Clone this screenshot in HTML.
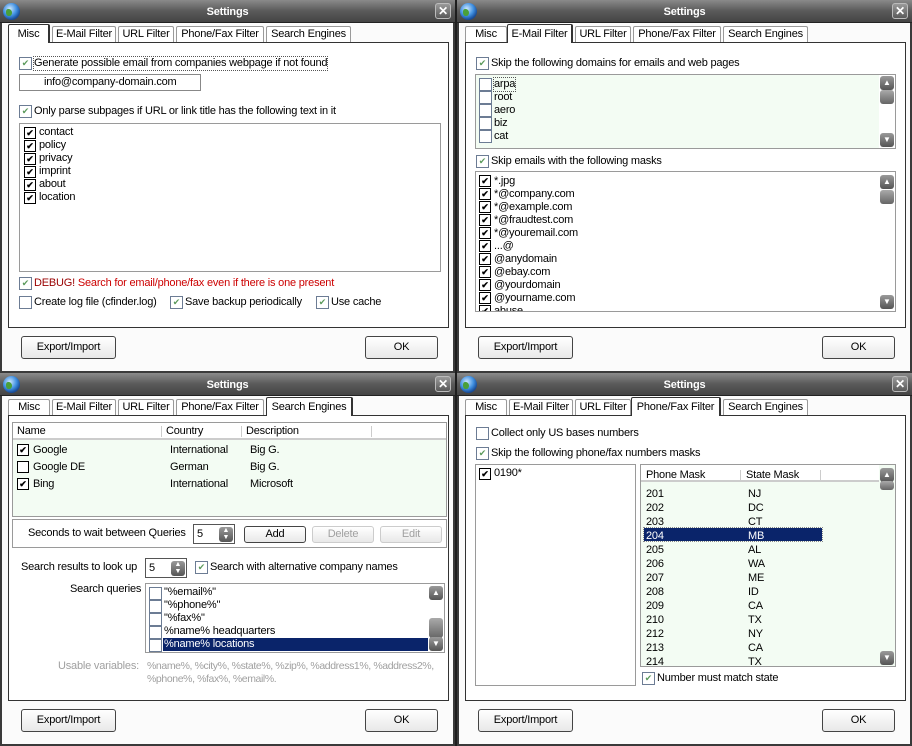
<!DOCTYPE html>
<html><head><meta charset="utf-8"><style>
*{margin:0;padding:0;box-sizing:border-box}
body{width:912px;height:746px;background:#1e1e1e;font-family:"Liberation Sans",sans-serif;font-size:11px;letter-spacing:-0.2px;color:#000;position:relative;overflow:hidden}
.w{position:absolute;width:455px;height:373px;background:#fbfbfb;border:2px solid #3a3a3a;border-top:none}
.a{position:absolute;white-space:nowrap;line-height:13px}
.tb{position:absolute;left:-2px;top:0;width:455px;height:23px;background:linear-gradient(#8a8a8a,#5a5a5a 50%,#444);border-bottom:1px solid #222}
.tt{position:absolute;left:0;right:0;top:6px;text-align:center;color:#fff;font-weight:bold;font-size:11px}
.gl{position:absolute;left:3px;top:3px;width:17px;height:17px;border-radius:50%;background:radial-gradient(circle at 40% 35%,#cfe8ff,#3f8fe0 45%,#1b4f9a 70%,#0b2e63);}
.gl:after{content:"";position:absolute;left:3px;top:6px;width:6px;height:7px;background:#4aa03a;border-radius:40% 60% 50% 50%}
.cx{position:absolute;right:4px;top:3px;width:16px;height:16px;border:1px solid #bbb;border-radius:3px;background:linear-gradient(#9a9a9a,#5a5a5a);color:#fff;font-weight:bold;font-size:12px;text-align:center;line-height:14px}
.tab{position:absolute;top:26px;height:16px;border:1px solid #9a9a9a;border-bottom:none;background:#fff;text-align:center;line-height:14px;border-radius:2px 2px 0 0}
.tab.on{top:24px;height:19px;border-color:#333;border-width:1px 2px 0 1px;z-index:2;line-height:18px}
.pn{position:absolute;left:6px;top:42px;width:441px;height:286px;border:1px solid #333;background:#fff}
.cb{position:absolute;width:13px;height:13px;border:1px solid #6c7c94;background:#fff;color:#5b9a5b;font-size:9px;line-height:11px;text-align:center;overflow:hidden;letter-spacing:0}
.k{border:1px solid #000;color:#000;font-weight:bold;width:12px;height:12px;line-height:10px}
.bt{position:absolute;height:23px;border:1px solid #444;border-radius:3px;background:linear-gradient(#fff,#e8e8e8);text-align:center;line-height:21px}
.lb{position:absolute;border:1px solid #9a9a9a;background:#fff;overflow:hidden}
.gr{background:#f3fcf3}
.sb{position:absolute;width:16px;background:#fff}
.ar{position:absolute;left:1px;width:14px;height:14px;border-radius:3px;background:linear-gradient(#9a9a9a,#555);color:#fff;font-size:8px;text-align:center;line-height:14px;letter-spacing:0}
.th{position:absolute;width:14px;left:1px;height:14px;border-radius:3px;background:linear-gradient(#aaa,#666)}
.gy{color:#a0a0a0}
</style></head><body>

<!-- Window 1: Misc -->
<div class="w" style="left:0;top:0">
<div class="tb"><div class="gl"></div><div class="tt">Settings</div><div class="cx">✕</div></div>
<div class="tab on" style="left:6px;width:42px">Misc</div>
<div class="tab" style="left:50px;width:64px">E-Mail Filter</div>
<div class="tab" style="left:116px;width:56px">URL Filter</div>
<div class="tab" style="left:174px;width:88px">Phone/Fax Filter</div>
<div class="tab" style="left:264px;width:85px">Search Engines</div>
<div class="pn"></div>
<div class="cb" style="left:17px;top:57px">✔</div><div class="a" style="left:32px;top:57px;outline:1px dotted #555">Generate possible email from companies webpage if not found</div>
<div class="lb" style="left:17px;top:74px;width:182px;height:17px;border-color:#888"><div class="a" style="left:24px;top:1px">info@company-domain.com</div></div>
<div class="cb" style="left:17px;top:105px">✔</div><div class="a" style="left:32px;top:105px">Only parse subpages if URL or link title has the following text in it</div>
<div class="lb" style="left:17px;top:123px;width:422px;height:149px">
<div class="cb k" style="left:4px;top:3px">✔</div><div class="a" style="left:19px;top:2px">contact</div>
<div class="cb k" style="left:4px;top:16px">✔</div><div class="a" style="left:19px;top:15px">policy</div>
<div class="cb k" style="left:4px;top:29px">✔</div><div class="a" style="left:19px;top:28px">privacy</div>
<div class="cb k" style="left:4px;top:42px">✔</div><div class="a" style="left:19px;top:41px">imprint</div>
<div class="cb k" style="left:4px;top:55px">✔</div><div class="a" style="left:19px;top:54px">about</div>
<div class="cb k" style="left:4px;top:68px">✔</div><div class="a" style="left:19px;top:67px">location</div>
</div>
<div class="cb" style="left:17px;top:277px">✔</div><div class="a" style="left:32px;top:277px;color:#900">DEBUG! <span style="color:#c00">Search for email/phone/fax even if there is one present</span></div>
<div class="cb" style="left:17px;top:296px"></div><div class="a" style="left:32px;top:296px">Create log file (cfinder.log)</div>
<div class="cb" style="left:168px;top:296px">✔</div><div class="a" style="left:183px;top:296px">Save backup periodically</div>
<div class="cb" style="left:314px;top:296px">✔</div><div class="a" style="left:329px;top:296px">Use cache</div>
<div class="bt" style="left:19px;top:336px;width:95px">Export/Import</div>
<div class="bt" style="left:363px;top:336px;width:73px">OK</div>
</div>

<!-- Window 2: E-Mail Filter -->
<div class="w" style="left:457px;top:0">
<div class="tb"><div class="gl"></div><div class="tt">Settings</div><div class="cx">✕</div></div>
<div class="tab" style="left:6px;width:42px">Misc</div>
<div class="tab on" style="left:48px;width:66px">E-Mail Filter</div>
<div class="tab" style="left:116px;width:56px">URL Filter</div>
<div class="tab" style="left:174px;width:88px">Phone/Fax Filter</div>
<div class="tab" style="left:264px;width:85px">Search Engines</div>
<div class="pn"></div>
<div class="cb" style="left:17px;top:57px">✔</div><div class="a" style="left:32px;top:57px">Skip the following domains for emails and web pages</div>
<div class="lb gr" style="left:16px;top:74px;width:421px;height:75px">
<div class="cb" style="left:3px;top:3px"></div><div class="a" style="left:18px;top:3px;outline:1px dotted #555">arpa</div>
<div class="cb" style="left:3px;top:16px"></div><div class="a" style="left:18px;top:16px">root</div>
<div class="cb" style="left:3px;top:29px"></div><div class="a" style="left:18px;top:29px">aero</div>
<div class="cb" style="left:3px;top:42px"></div><div class="a" style="left:18px;top:42px">biz</div>
<div class="cb" style="left:3px;top:55px"></div><div class="a" style="left:18px;top:55px">cat</div>
<div class="sb" style="right:0;top:0;height:73px"><div class="ar" style="top:1px">▲</div><div class="th" style="top:15px"></div><div class="ar" style="bottom:1px">▼</div></div>
</div>
<div class="cb" style="left:17px;top:155px">✔</div><div class="a" style="left:32px;top:155px">Skip emails with the following masks</div>
<div class="lb" style="left:16px;top:171px;width:421px;height:141px">
<div class="cb k" style="left:3px;top:3px">✔</div><div class="a" style="left:18px;top:3px">*.jpg</div>
<div class="cb k" style="left:3px;top:16px">✔</div><div class="a" style="left:18px;top:16px">*@company.com</div>
<div class="cb k" style="left:3px;top:29px">✔</div><div class="a" style="left:18px;top:29px">*@example.com</div>
<div class="cb k" style="left:3px;top:42px">✔</div><div class="a" style="left:18px;top:42px">*@fraudtest.com</div>
<div class="cb k" style="left:3px;top:55px">✔</div><div class="a" style="left:18px;top:55px">*@youremail.com</div>
<div class="cb k" style="left:3px;top:68px">✔</div><div class="a" style="left:18px;top:68px">...@</div>
<div class="cb k" style="left:3px;top:81px">✔</div><div class="a" style="left:18px;top:81px">@anydomain</div>
<div class="cb k" style="left:3px;top:94px">✔</div><div class="a" style="left:18px;top:94px">@ebay.com</div>
<div class="cb k" style="left:3px;top:107px">✔</div><div class="a" style="left:18px;top:107px">@yourdomain</div>
<div class="cb k" style="left:3px;top:120px">✔</div><div class="a" style="left:18px;top:120px">@yourname.com</div>
<div class="cb k" style="left:3px;top:133px">✔</div><div class="a" style="left:18px;top:133px">abuse</div>
<div class="sb" style="right:0;top:0;height:139px"><div class="ar" style="top:3px">▲</div><div class="th" style="top:18px"></div><div class="ar" style="bottom:2px">▼</div></div>
</div>
<div class="bt" style="left:19px;top:336px;width:95px">Export/Import</div>
<div class="bt" style="left:363px;top:336px;width:73px">OK</div>
</div>

<!-- Window 3: Search Engines -->
<div class="w" style="left:0;top:373px">
<div class="tb"><div class="gl"></div><div class="tt">Settings</div><div class="cx">✕</div></div>
<div class="tab" style="left:6px;width:42px">Misc</div>
<div class="tab" style="left:50px;width:64px">E-Mail Filter</div>
<div class="tab" style="left:116px;width:56px">URL Filter</div>
<div class="tab" style="left:174px;width:88px">Phone/Fax Filter</div>
<div class="tab on" style="left:264px;width:87px">Search Engines</div>
<div class="pn"></div>
<div class="lb gr" style="left:10px;top:49px;width:435px;height:95px">
<div style="position:absolute;left:0;top:0;width:100%;height:17px;background:#fff;border-bottom:2px solid #ccc"></div>
<div class="a" style="left:4px;top:2px">Name</div><div class="a" style="left:153px;top:2px">Country</div><div class="a" style="left:233px;top:2px">Description</div>
<div style="position:absolute;left:148px;top:3px;width:1px;height:11px;background:#ccc"></div>
<div style="position:absolute;left:228px;top:3px;width:1px;height:11px;background:#ccc"></div>
<div style="position:absolute;left:358px;top:3px;width:1px;height:11px;background:#ccc"></div>
<div class="cb k" style="left:4px;top:21px">✔</div><div class="a" style="left:20px;top:21px">Google</div><div class="a" style="left:157px;top:21px">International</div><div class="a" style="left:237px;top:21px">Big G.</div>
<div class="cb k" style="left:4px;top:38px"></div><div class="a" style="left:20px;top:38px">Google DE</div><div class="a" style="left:157px;top:38px">German</div><div class="a" style="left:237px;top:38px">Big G.</div>
<div class="cb k" style="left:4px;top:55px">✔</div><div class="a" style="left:20px;top:55px">Bing</div><div class="a" style="left:157px;top:55px">International</div><div class="a" style="left:237px;top:55px">Microsoft</div>
</div>
<div class="lb" style="left:10px;top:146px;width:435px;height:29px"></div>
<div class="a" style="left:26px;top:154px">Seconds to wait between Queries</div>
<div class="lb" style="left:191px;top:151px;width:42px;height:20px;border-color:#555"><div class="a" style="left:3px;top:3px">5</div><div class="ar" style="left:25px;top:2px;height:15px;font-size:7px;line-height:7px">▲<br>▼</div></div>
<div class="bt" style="left:242px;top:153px;width:62px;height:17px;line-height:15px">Add</div>
<div class="bt gy" style="left:310px;top:153px;width:62px;height:17px;line-height:15px;border-color:#ccc">Delete</div>
<div class="bt gy" style="left:378px;top:153px;width:62px;height:17px;line-height:15px;border-color:#ccc">Edit</div>
<div class="a" style="left:19px;top:188px">Search results to look up</div>
<div class="lb" style="left:143px;top:185px;width:42px;height:20px;border-color:#555"><div class="a" style="left:3px;top:3px">5</div><div class="ar" style="left:25px;top:2px;height:15px;font-size:7px;line-height:7px">▲<br>▼</div></div>
<div class="cb" style="left:193px;top:188px">✔</div><div class="a" style="left:208px;top:188px">Search with alternative company names</div>
<div class="a" style="left:68px;top:210px">Search queries</div>
<div class="lb" style="left:143px;top:210px;width:300px;height:70px">
<div class="cb" style="left:3px;top:3px"></div><div class="a" style="left:18px;top:2px">"%email%"</div>
<div class="cb" style="left:3px;top:16px"></div><div class="a" style="left:18px;top:15px">"%phone%"</div>
<div class="cb" style="left:3px;top:29px"></div><div class="a" style="left:18px;top:28px">"%fax%"</div>
<div class="cb" style="left:3px;top:42px"></div><div class="a" style="left:18px;top:41px">%name% headquarters</div>
<div class="cb" style="left:3px;top:55px"></div><div style="position:absolute;left:17px;top:54px;width:265px;height:13px;background:#0a246a"></div><div class="a" style="left:18px;top:54px;color:#fff">%name% locations</div>
<div class="sb" style="right:0;top:0;height:68px"><div class="ar" style="top:2px">▲</div><div class="th" style="top:34px;height:20px"></div><div class="ar" style="bottom:1px">▼</div></div>
</div>
<div class="a gy" style="left:56px;top:287px">Usable variables:</div>
<div class="a gy" style="left:145px;top:287px;font-size:10.5px;letter-spacing:-0.4px">%name%, %city%, %state%, %zip%, %address1%, %address2%,</div>
<div class="a gy" style="left:145px;top:300px;font-size:10.5px;letter-spacing:-0.4px">%phone%, %fax%, %email%.</div>
<div class="bt" style="left:19px;top:336px;width:95px">Export/Import</div>
<div class="bt" style="left:363px;top:336px;width:73px">OK</div>
</div>

<!-- Window 4: Phone/Fax -->
<div class="w" style="left:457px;top:373px">
<div class="tb"><div class="gl"></div><div class="tt">Settings</div><div class="cx">✕</div></div>
<div class="tab" style="left:6px;width:42px">Misc</div>
<div class="tab" style="left:50px;width:64px">E-Mail Filter</div>
<div class="tab" style="left:116px;width:56px">URL Filter</div>
<div class="tab on" style="left:172px;width:90px">Phone/Fax Filter</div>
<div class="tab" style="left:264px;width:85px">Search Engines</div>
<div class="pn"></div>
<div class="cb" style="left:17px;top:54px"></div><div class="a" style="left:32px;top:54px">Collect only US bases numbers</div>
<div class="cb" style="left:17px;top:74px">✔</div><div class="a" style="left:32px;top:74px">Skip the following phone/fax numbers masks</div>
<div class="lb" style="left:16px;top:91px;width:161px;height:222px">
<div class="cb k" style="left:3px;top:3px">✔</div><div class="a" style="left:18px;top:2px">0190*</div>
</div>
<div class="lb gr" style="left:181px;top:91px;width:256px;height:203px">
<div style="position:absolute;left:0;top:0;width:238px;height:17px;background:#fff;border-bottom:2px solid #ccc"></div>
<div class="a" style="left:5px;top:4px">Phone Mask</div><div class="a" style="left:105px;top:4px">State Mask</div>
<div style="position:absolute;left:99px;top:5px;width:1px;height:11px;background:#ccc"></div>
<div style="position:absolute;left:179px;top:5px;width:1px;height:11px;background:#ccc"></div>
<div style="position:absolute;left:3px;top:63px;width:178px;height:13px;background:#0a246a;outline:1px dotted #888"></div>
<div class="a" style="left:5px;top:22px;line-height:14px">201<br>202<br>203<br><span style="color:#fff">204</span><br>205<br>206<br>207<br>208<br>209<br>210<br>212<br>213<br>214</div>
<div class="a" style="left:107px;top:22px;line-height:14px">NJ<br>DC<br>CT<br><span style="color:#fff">MB</span><br>AL<br>WA<br>ME<br>ID<br>CA<br>TX<br>NY<br>CA<br>TX</div>
<div class="sb" style="right:0;top:0;height:201px;background:#f3fcf3"><div class="ar" style="top:3px">▲</div><div class="th" style="top:16px;height:9px"></div><div class="ar" style="bottom:1px">▼</div></div>
</div>
<div class="cb" style="left:183px;top:299px">✔</div><div class="a" style="left:198px;top:299px">Number must match state</div>
<div class="bt" style="left:19px;top:336px;width:95px">Export/Import</div>
<div class="bt" style="left:363px;top:336px;width:73px">OK</div>
</div>
</body></html>
